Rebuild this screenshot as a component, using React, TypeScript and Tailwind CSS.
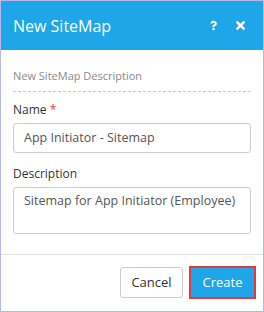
import React from "react";
import { FaQuestion, FaTimes } from "react-icons/fa";

export default function App() {
  return (
    <div
      className="w-[264px] h-[312px] border border-[#b4b8ee] bg-white flex flex-col"
      style={{ fontFamily: '"Open Sans", sans-serif' }}
    >
      <div className="h-[49px] bg-[#1ea6e9] flex items-center pl-[12px] pr-[17px] text-white">
        <div className="text-[16px] leading-none flex-1">New SiteMap</div>
        <FaQuestion className="w-[7px] h-[11px] mr-[18px]" />
        <FaTimes className="w-[11px] h-[13px]" />
      </div>
      <div className="flex-1 px-[12px] pt-[18px] flex flex-col">
        <div className="text-[11px] leading-[16px] text-[#8a8a8a] pb-[7px] border-b border-dashed border-[#c8c8c8]">
          New SiteMap Description
        </div>
        <div className="mt-[10px] text-[12px] leading-[16px] text-[#333]">
          Name <span className="text-[#e23b3b]">*</span>
        </div>
        <div className="mt-[5px] h-[30px] border border-[#cfcfcf] rounded-[3px] flex items-center px-[10px] text-[12.5px] text-[#555]">
          App Initiator - Sitemap
        </div>
        <div className="mt-[13px] text-[12px] leading-[16px] text-[#333]">Description</div>
        <div className="mt-[5px] h-[47px] border border-[#cfcfcf] rounded-[3px] px-[10px] pt-[4px] text-[12.5px] leading-[18px] text-[#555] whitespace-nowrap">
          Sitemap for App Initiator (Employee)
        </div>
      </div>
      <div className="h-[57px] border-t border-[#e2e2e2] flex items-center justify-end pr-[7px] gap-[6px] pb-[1px]">
        <button className="h-[31px] w-[63px] border border-[#cccccc] rounded-[3px] text-[13px] text-[#333] bg-white">
          Cancel
        </button>
        <div className="border-2 border-[#e8363c] p-0">
          <button className="h-[29px] w-[63px] bg-[#1ea6e9] text-white text-[13px]">Create</button>
        </div>
      </div>
    </div>
  );
}
